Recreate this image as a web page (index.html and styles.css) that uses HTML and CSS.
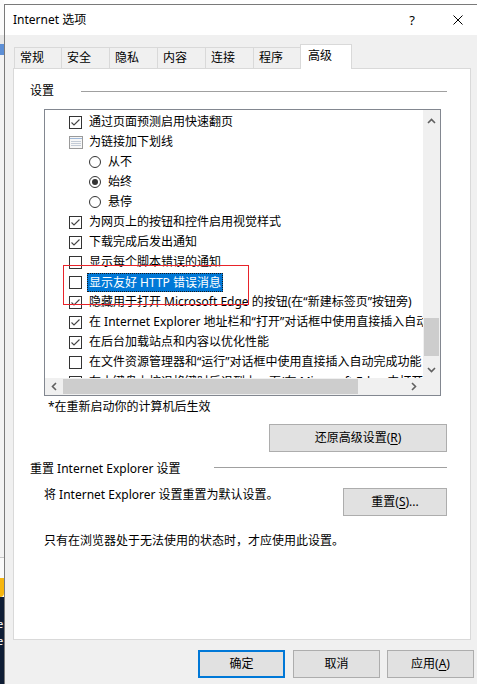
FILE: index.html
```html
<!DOCTYPE html>
<html lang="zh-CN">
<head>
<meta charset="utf-8">
<title>Internet 选项</title>
<link rel="stylesheet" href="styles.css">
</head>
<body>
<div class="screen">
  <div class="bg">
    <div class="bg-s1"></div>
    <div class="bg-s2"></div>
    <div class="bg-s3"></div>
    <div class="bg-s4"></div>
    <div class="bg-s5"></div>
    <div class="bg-s6"></div>
    <div class="bg-s7"></div>
    <div class="bg-s8"><span>e</span><span>e</span></div>
  </div>
  <div class="dialog">
    <div class="titlebar">
      <span class="title">Internet 选项</span>
      <span class="tbtn help">?</span>
      <span class="tbtn close"><svg width="10" height="10" viewBox="0 0 10 10"><path d="M0.5 0.5 L9.5 9.5 M9.5 0.5 L0.5 9.5" stroke="#000" stroke-width="1" fill="none"/></svg></span>
    </div>
    <div class="body">
      <div class="tabs">
        <div class="tab w47">常规</div>
        <div class="tab w48">安全</div>
        <div class="tab w48">隐私</div>
        <div class="tab w48">内容</div>
        <div class="tab w48">连接</div>
        <div class="tab w47">程序</div>
        <div class="tab active">高级</div>
      </div>
      <div class="panel">
        <div class="ghead">
          <span>设置</span>
          <span class="gline g1"></span>
        </div>
        <div class="listbox">
          <div class="lb-main">
            <div class="lb-view">
              <div class="row"><svg class="cb" viewBox="0 0 13 13"><rect x="0.5" y="0.5" width="12" height="12" fill="#fff" stroke="#333"/><path d="M2.5 6.5 L5 9 L10.5 3.5" fill="none" stroke="#444" stroke-width="1.1"/></svg><span class="lbl">通过页面预测启用快速翻页</span></div>
              <div class="row"><svg class="grp" viewBox="0 0 14 13"><rect x="0.5" y="0.5" width="13" height="12" fill="#f7f7f7" stroke="#9a9a9a"/><path d="M1 2.5 H13" stroke="#9fb8d8" stroke-width="1"/><path d="M2 5.5 H12 M2 7.5 H12 M2 9.5 H12" stroke="#c3cbd6" stroke-width="1"/></svg><span class="lbl">为链接加下划线</span></div>
              <div class="row sub"><svg class="rb" viewBox="0 0 12 12"><circle cx="6" cy="6" r="5.5" fill="#fff" stroke="#333"/></svg><span class="lbl">从不</span></div>
              <div class="row sub"><svg class="rb" viewBox="0 0 12 12"><circle cx="6" cy="6" r="5.5" fill="#fff" stroke="#333"/><circle cx="6" cy="6" r="3" fill="#333"/></svg><span class="lbl">始终</span></div>
              <div class="row sub"><svg class="rb" viewBox="0 0 12 12"><circle cx="6" cy="6" r="5.5" fill="#fff" stroke="#333"/></svg><span class="lbl">悬停</span></div>
              <div class="row"><svg class="cb" viewBox="0 0 13 13"><rect x="0.5" y="0.5" width="12" height="12" fill="#fff" stroke="#333"/><path d="M2.5 6.5 L5 9 L10.5 3.5" fill="none" stroke="#444" stroke-width="1.1"/></svg><span class="lbl">为网页上的按钮和控件启用视觉样式</span></div>
              <div class="row"><svg class="cb" viewBox="0 0 13 13"><rect x="0.5" y="0.5" width="12" height="12" fill="#fff" stroke="#333"/><path d="M2.5 6.5 L5 9 L10.5 3.5" fill="none" stroke="#444" stroke-width="1.1"/></svg><span class="lbl">下载完成后发出通知</span></div>
              <div class="row"><svg class="cb" viewBox="0 0 13 13"><rect x="0.5" y="0.5" width="12" height="12" fill="#fff" stroke="#333"/></svg><span class="lbl">显示每个脚本错误的通知</span></div>
              <div class="row"><svg class="cb" viewBox="0 0 13 13"><rect x="0.5" y="0.5" width="12" height="12" fill="#fff" stroke="#333"/></svg><span class="lbl sel">显示友好 HTTP 错误消息</span></div>
              <div class="row"><svg class="cb" viewBox="0 0 13 13"><rect x="0.5" y="0.5" width="12" height="12" fill="#fff" stroke="#333"/><path d="M2.5 6.5 L5 9 L10.5 3.5" fill="none" stroke="#444" stroke-width="1.1"/></svg><span class="lbl">隐藏用于打开 Microsoft Edge 的按钮(在“新建标签页”按钮旁)</span></div>
              <div class="row"><svg class="cb" viewBox="0 0 13 13"><rect x="0.5" y="0.5" width="12" height="12" fill="#fff" stroke="#333"/><path d="M2.5 6.5 L5 9 L10.5 3.5" fill="none" stroke="#444" stroke-width="1.1"/></svg><span class="lbl">在 Internet Explorer 地址栏和“打开”对话框中使用直接插入自动完成</span></div>
              <div class="row"><svg class="cb" viewBox="0 0 13 13"><rect x="0.5" y="0.5" width="12" height="12" fill="#fff" stroke="#333"/><path d="M2.5 6.5 L5 9 L10.5 3.5" fill="none" stroke="#444" stroke-width="1.1"/></svg><span class="lbl">在后台加载站点和内容以优化性能</span></div>
              <div class="row"><svg class="cb" viewBox="0 0 13 13"><rect x="0.5" y="0.5" width="12" height="12" fill="#fff" stroke="#333"/></svg><span class="lbl">在文件资源管理器和“运行”对话框中使用直接插入自动完成功能</span></div>
              <div class="row"><svg class="cb" viewBox="0 0 13 13"><rect x="0.5" y="0.5" width="12" height="12" fill="#fff" stroke="#333"/></svg><span class="lbl">在小键盘上按退格键时后退到上一页(在 Microsoft Edge 中打开网站)</span></div>
            </div>
            <div class="vscroll">
              <div class="arrow up"><svg width="9" height="6" viewBox="0 0 9 6"><path d="M1 5 L4.5 1.5 L8 5" fill="none" stroke="#606060" stroke-width="1.6"/></svg></div>
              <div class="vtrack-a"></div>
              <div class="vthumb"></div>
              <div class="vtrack-b"></div>
              <div class="arrow down"><svg width="9" height="6" viewBox="0 0 9 6"><path d="M1 1 L4.5 4.5 L8 1" fill="none" stroke="#606060" stroke-width="1.6"/></svg></div>
            </div>
          </div>
          <div class="hscroll">
            <div class="harrow"><svg width="6" height="9" viewBox="0 0 6 9"><path d="M5 1 L1.5 4.5 L5 8" fill="none" stroke="#606060" stroke-width="1.6"/></svg></div>
            <div class="hthumb"></div>
            <div class="htrack"></div>
            <div class="harrow"><svg width="6" height="9" viewBox="0 0 6 9"><path d="M1 1 L4.5 4.5 L1 8" fill="none" stroke="#606060" stroke-width="1.6"/></svg></div>
            <div class="corner"></div>
          </div>
        </div>
        <div class="note">*在重新启动你的计算机后生效</div>
        <div class="btnrow"><button class="btn restore">还原高级设置(<u>R</u>)</button></div>
        <div class="ghead g2">
          <span>重置 Internet Explorer 设置</span>
          <span class="gline gl2"></span>
        </div>
        <div class="resetrow">
          <span class="resettext">将 Internet Explorer 设置重置为默认设置。</span>
          <button class="btn reset">重置(<u>S</u>)...</button>
        </div>
        <div class="hint">只有在浏览器处于无法使用的状态时，才应使用此设置。</div>
      </div>
      <div class="footer">
        <button class="btn fbtn default">确定</button>
        <button class="btn fbtn ml8">取消</button>
        <button class="btn fbtn ml7">应用(<u>A</u>)</button>
      </div>
    </div>
  </div>
  <div class="redbox"></div>
</div>
</body>
</html>
```

FILE: styles.css
```css
html, body {
  margin: 0;
  padding: 0;
}
body {
  width: 477px;
  height: 684px;
  overflow: hidden;
  background: #fff;
  font-family: "Noto Sans", "Noto Sans CJK SC", sans-serif;
  font-size: 12px;
  line-height: 16px;
  color: #000;
}
.screen {
  position: relative;
  display: flex;
  height: 684px;
  overflow: hidden;
}
.bg {
  width: 4px;
  flex: none;
  display: flex;
  flex-direction: column;
  overflow: hidden;
}
.bg-s1 { height: 35px; background: #fbfbfb; }
.bg-s2 { height: 9px; background: #e6e6e6; }
.bg-s3 { height: 11px; background: #5d8fd6; }
.bg-s4 { height: 502px; background: #f3f3f3; }
.bg-s5 { height: 1px; background: #c8c8c8; }
.bg-s6 { height: 20px; background: #fafafa; }
.bg-s7 { height: 19px; background: #f6b60f; border-radius: 0 0 4px 0; }
.bg-s8 {
  height: 87px;
  background: #0f1d35;
  color: #fff;
  font-size: 11px;
  line-height: 17px;
  display: flex;
  flex-direction: column;
  padding-top: 18px;
  box-sizing: border-box;
  text-indent: -3px;
}
.dialog {
  flex: none;
  width: 477px;
  height: 680px;
  margin-top: 4px;
  box-sizing: border-box;
  border-top: 1px solid #7a7a7a;
  border-left: 1px solid #7a7a7a;
  display: flex;
  flex-direction: column;
}
.titlebar {
  flex: none;
  height: 30px;
  background: #fff;
  display: flex;
  align-items: center;
}
.title {
  flex: 1;
  padding-left: 8px;
}
.tbtn {
  width: 46px;
  height: 30px;
  display: flex;
  align-items: center;
  justify-content: center;
}
.help {
  font-size: 13px;
}
.body {
  flex: 1;
  background: #f0f0f0;
  padding: 9px 0 0 8px;
}
.tabs {
  display: flex;
  height: 24px;
  padding-left: 1px;
  position: relative;
  z-index: 1;
}
.tab {
  box-sizing: border-box;
  height: 21px;
  margin-top: 3px;
  border: 1px solid #d9d9d9;
  border-right: none;
  border-bottom: none;
  padding-left: 5px;
  line-height: 20px;
  background: #f0f0f0;
}
.w47 { width: 47px; }
.w48 { width: 48px; }
.tab.active {
  width: 52px;
  height: 25px;
  margin-top: 0;
  border-right: 1px solid #d9d9d9;
  background: #fff;
  padding-left: 7px;
  line-height: 22px;
}
.panel {
  width: 458px;
  height: 572px;
  box-sizing: border-box;
  border: 1px solid #d9d9d9;
  background: #fff;
  padding: 0 23px 0 16px;
}
.ghead {
  display: flex;
  height: 16px;
  margin-top: 14px;
  white-space: nowrap;
}
.gline {
  flex: 1;
  height: 1px;
  background: #a0a0a0;
}
.g1 { margin: 8px 0 0 27px; }
.ghead.g2 { margin-top: 9px; }
.gl2 { margin: 6px 0 0 33px; }
.listbox {
  margin: 10px 0 0 14px;
  width: 397px;
  height: 287px;
  box-sizing: border-box;
  border: 1px solid #828790;
  display: flex;
  flex-direction: column;
}
.lb-main {
  display: flex;
  height: 268px;
}
.lb-view {
  width: 378px;
  overflow: hidden;
  padding-top: 2px;
  box-sizing: border-box;
}
.row {
  height: 20px;
  display: flex;
  align-items: center;
  white-space: nowrap;
  padding-left: 24px;
}
.row.sub { padding-left: 44px; }
.cb {
  width: 13px;
  height: 13px;
  flex: none;
  margin-right: 7px;
}
.grp {
  width: 14px;
  height: 13px;
  flex: none;
  margin-right: 6px;
}
.rb {
  width: 12px;
  height: 12px;
  flex: none;
  margin-right: 7px;
}
.lbl {
  flex: none;
}
.lbl.sel {
  background: #0078d7;
  color: #fff;
  margin-left: -2px;
  padding: 0 1px;
  line-height: 17px;
  border: 1px dotted #1a1a1a;
}
.vscroll {
  width: 17px;
  background: #f0f0f0;
  display: flex;
  flex-direction: column;
}
.arrow {
  display: flex;
  align-items: center;
  justify-content: center;
}
.arrow.up { height: 22px; }
.arrow.down { height: 16px; }
.vtrack-a { height: 186px; }
.vthumb {
  height: 38px;
  margin: 0 1px;
  background: #cdcdcd;
}
.vtrack-b { height: 6px; }
.hscroll {
  height: 17px;
  display: flex;
  background: #f0f0f0;
}
.harrow {
  width: 18px;
  display: flex;
  align-items: center;
  justify-content: center;
}
.hthumb {
  width: 295px;
  margin: 1px 0;
  background: #cdcdcd;
}
.htrack { width: 47px; }
.harrow:last-of-type { width: 17px; }
.corner {
  width: 17px;
  background: #f0f0f0;
}
.note {
  margin: 3px 0 0 18px;
}
.btnrow {
  display: flex;
  justify-content: flex-end;
  margin-top: 9px;
}
.btn {
  height: 28px;
  box-sizing: border-box;
  border: 1px solid #adadad;
  background: #e1e1e1;
  font: inherit;
  color: #000;
  padding: 0;
  margin: 0;
}
.btn u {
  text-decoration: underline;
  text-underline-offset: 2px;
}
.restore { width: 178px; }
.resetrow {
  display: flex;
  align-items: flex-start;
  margin-top: 11px;
  padding-left: 14px;
}
.resettext {
  flex: 1;
  margin-top: -1px;
}
.reset { width: 104px; }
.hint {
  margin-top: 17px;
  padding-left: 14px;
}
.footer {
  display: flex;
  margin-top: 10px;
  padding-left: 185px;
}
.fbtn { width: 87px; }
.fbtn.default { border: 2px solid #0078d7; }
.ml8 { margin-left: 8px; }
.ml7 { margin-left: 7px; }
.redbox {
  position: absolute;
  left: 63px;
  top: 265px;
  width: 186px;
  height: 40px;
  box-sizing: border-box;
  border: 1px solid #e8232a;
  pointer-events: none;
}
```
